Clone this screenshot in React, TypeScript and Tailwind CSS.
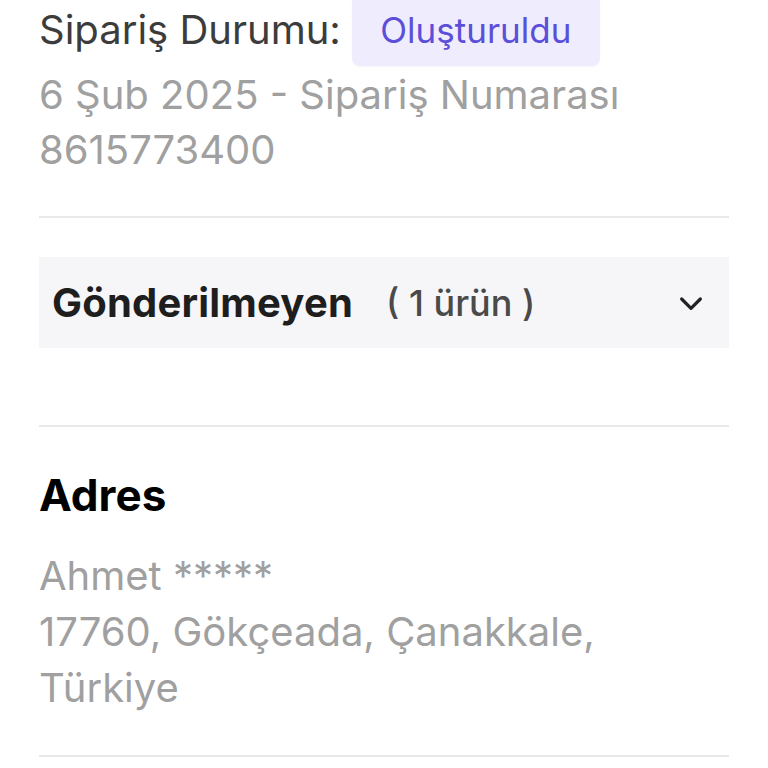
function ChevronDown() {
  return (
    <svg width="32" height="32" viewBox="0 0 24 24" fill="none" stroke="#222222" strokeWidth="2.4" strokeLinecap="round" strokeLinejoin="round">
      <path d="M5 9l7 7 7-7" />
    </svg>
  );
}

export default function App() {
  return (
    <div className="bg-white w-full h-[768px] overflow-hidden px-[39px] font-['Inter',sans-serif]">
      <div className="-mt-[6px] flex items-center h-[72px]">
        <span className="text-[40px] text-[#3c3c3c] leading-none whitespace-nowrap">Sipariş Durumu:</span>
        <span className="ml-[11px] h-full w-[248px] flex items-center justify-center bg-[#efecfd] rounded-[8px] text-[35px] text-[#5b4fd9] leading-none whitespace-nowrap shadow-[0_1px_2px_rgba(0,0,0,0.04)]">
          Oluşturuldu
        </span>
      </div>
      <div className="mt-[1px] text-[40px] leading-[55px] text-[#a0a0a0] whitespace-nowrap">
        <div>6 Şub 2025 - Sipariş Numarası</div>
        <div>8615773400</div>
      </div>
      <div className="mt-[39px] h-[2px] bg-[#e9e9eb]" />
      <div className="mt-[39px] h-[91px] bg-[#f6f6f8] flex items-center pl-[13px] pr-[22px]">
        <span className="text-[40px] font-bold text-[#1e1e1e] leading-none tracking-[0.2px]">Gönderilmeyen</span>
        <span className="ml-[33px] text-[36px] font-medium text-[#4a4a4a] leading-none whitespace-nowrap">( 1 ürün )</span>
        <span className="ml-auto flex items-center">
          <ChevronDown />
        </span>
      </div>
      <div className="mt-[77px] h-[2px] bg-[#e9e9eb]" />
      <div className="mt-[43px] text-[44px] font-bold text-black leading-[50px]">Adres</div>
      <div className="mt-[28px] text-[40px] leading-[56px] text-[#a0a0a0] whitespace-nowrap">
        <div>Ahmet *****</div>
        <div>17760, Gökçeada, Çanakkale,</div>
        <div>Türkiye</div>
      </div>
      <div className="mt-[39px] h-[2px] bg-[#e9e9eb]" />
    </div>
  );
}
